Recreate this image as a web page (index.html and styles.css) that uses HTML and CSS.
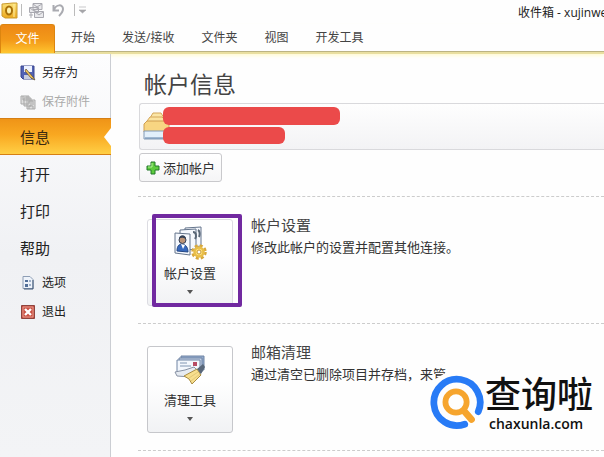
FILE: index.html
```html
<!DOCTYPE html>
<html lang="zh-CN">
<head>
<meta charset="utf-8">
<title>收件箱</title>
<link rel="stylesheet" href="styles.css">
</head>
<body>
<header class="titlebar">
  <div class="quick">
    <svg class="app-icon" width="17" height="17" viewBox="0 0 17 17"><defs><linearGradient id="gold" x2="0" y2="1"><stop stop-color="#fbe27a"/><stop offset="1" stop-color="#eda91d"/></linearGradient></defs><path d="M1 2 12 1h4v15H4l-3-2z" fill="url(#gold)" stroke="#c99a2e"/><path d="M13 2v13" stroke="#fff0a5"/><ellipse cx="8" cy="8.500" rx="3" ry="4" fill="#fff2a9" stroke="#a87009" stroke-width="2"/></svg>
    <i class="divider"></i>
    <svg width="17" height="17" viewBox="0 0 17 17" fill="#e9e9ec" stroke="#a9a9b0"><path d="M5 1.500h9v6H5zM1.500 5.500h9v5h-9zM6.500 9.500h9v6h-9z"/><path d="m5 2 4 3 5-3M2 6l4 3 4-3M7 10l4 3 4-3M1 13h4M3 11v5" fill="none"/></svg>
    <svg class="undo" width="13" height="15" viewBox="0 0 13 15"><path d="M1.500 2v5.500H7M2 7c2-6 9-6 9-1 0 3-2 5-4 7" fill="none" stroke="#aaabb1" stroke-width="2"/></svg>
    <i class="divider"></i>
    <svg class="more" width="7" height="8" viewBox="0 0 7 8"><path d="M0 1h7M0 4h7L3.500 7z" fill="#a5a5a9" stroke="#a5a5a9" stroke-width=".6"/></svg>
  </div>
  <span class="window-title">收件箱 - xujinwe</span>
</header>
<nav class="tabs">
  <button class="tab file">文件</button>
  <button class="tab">开始</button>
  <button class="tab">发送/接收</button>
  <button class="tab">文件夹</button>
  <button class="tab">视图</button>
  <button class="tab">开发工具</button>
</nav>
<div class="backstage">
  <nav class="side">
    <button class="item small"><svg width="16" height="16" viewBox="0 0 16 16"><path d="M1 1h13v13H3l-2-2z" fill="#5262b4" stroke="#39458d"/><path d="M4 1h8v6H4z" fill="#edf2ff"/><path d="M4 10h7v4H4z" fill="#c7cce0"/><path d="m6 4 7 8 2 3-4-2-6-7z" fill="#f4c65b" stroke="#57472e" stroke-width=".7"/></svg>另存为</button>
    <button class="item small" disabled><svg width="16" height="16" viewBox="0 0 16 16" fill="#dedede" stroke="#a9a9a9"><path d="M1 2h8v8H1zM4 4h7v8H4zM7 6h8v9H7z"/><path d="M3 2v4h4V2M9 9V7h4v4M9 15v-3h4v3" fill="none"/></svg>保存附件</button>
    <button class="item selected">信息</button>
    <button class="item">打开</button>
    <button class="item">打印</button>
    <button class="item">帮助</button>
    <button class="item small"><svg width="16" height="16" viewBox="0 0 16 16"><path d="M3 1.500h7l3 3v9H3z" fill="#eef3fa" stroke="#8e9eb5"/><path d="M13 5v9H4" fill="none" stroke="#3e5676"/><path d="M5 5h3v2H5zM5 9h3v3H5z" fill="#526f99"/><path d="M9 6h2M9 10h2" stroke="#526f99"/></svg>选项</button>
    <button class="item small"><svg width="16" height="16" viewBox="0 0 16 16"><path d="M1.500 1.500h13v13h-13z" fill="#c94f42" stroke="#8f433d"/><path d="M3 3h10v10H3z" fill="none" stroke="#e49b8d"/><path d="m5 5 6 6m0-6-6 6" stroke="#fff" stroke-width="2.400"/></svg>退出</button>
  </nav>
  <main class="content">
    <h1>帐户信息</h1>
    <div class="account">
      <svg width="28" height="30" viewBox="0 0 28 30"><path d="m7 6 3-5h8l3 5v8H7z" fill="#fbe6a6" stroke="#d4a75b"/><path d="m4 9 3-4h12l4 4v8H4z" fill="#fbe3a0" stroke="#d4a75b"/><path d="m1 12 3-3h17l5 3v8H1z" fill="#f8d582" stroke="#cf9e50"/><path d="M1 19h25v8H1z" fill="#e2effb" stroke="#8199b5"/><path d="M2 26h23" stroke="#5e7ea6"/></svg>
      <div class="masks"><i class="mask long"></i><i class="mask short"></i></div>
    </div>
    <button class="add"><svg width="14" height="14" viewBox="0 0 14 14"><path d="M5 1h4v4h4v4H9v4H5V9H1V5h4z" fill="#5ccb3d" stroke="#23782a"/><path d="M6 2v4H2" fill="none" stroke="#b2ef93"/></svg>添加帐户</button>
    <section class="row">
      <div class="frame">
        <button class="tile">
          <svg width="34" height="34" viewBox="0 0 34 34"><g fill="#f5f8fd" stroke="#65758c"><path d="m12 2 16-1v19l-16 2z"/><path d="m7 4 16-1v20L7 25z"/><path d="m2 7 15 1v21L2 27z"/></g><path d="M20 6c3 0 4 4 2 7M25 4c2 1 2 5 1 7" stroke="#596777" stroke-width="2" fill="none"/><path d="M4 25c0-6 3-7 5-7s6 2 6 8z" fill="#3769bd" stroke="#234683"/><path d="m8 18 2 5 2-4z" fill="#fff"/><circle cx="9.500" cy="14" r="3.500" fill="#bd9476" stroke="#334056"/><path d="M6 13c0-5 7-5 7 0-3-1-4-2-7 0z" fill="#334056"/><circle cx="26" cy="26" r="6.500" fill="none" stroke="#d8a83c" stroke-width="2.500" stroke-dasharray="3 2.100"/><circle cx="26" cy="26" r="4.500" fill="#ffe17a" stroke="#e8bd48" stroke-width="2.500"/><circle cx="26" cy="26" r="2" fill="#fff" stroke="#c59739"/></svg>
          <span>帐户设置</span><i class="arrow"></i>
        </button>
      </div>
      <div class="info"><h2>帐户设置</h2><p>修改此帐户的设置并配置其他连接。</p></div>
    </section>
    <section class="row">
      <button class="tile">
        <svg width="34" height="34" viewBox="0 0 34 34"><g stroke="#7185a4"><path d="M8 3h23v14H8z" fill="#91a9cd"/><path d="M6 5h23v14H6z" fill="#c5d3e9"/><path d="M4 7h23v14H4z" fill="#f3f7fd"/></g><path d="M7 10h7M7 13h11" stroke="#8196b2"/><path d="M20 9h4v4h-4z" fill="#b84b64"/><path d="m2 19 10-2 9-3 4 4-7 6-14-1z" fill="#e6ebf2" stroke="#8993a5"/><path d="m11 23 13-7 4 6-9 9-3-5z" fill="#f8df8e" stroke="#a98c42"/><path d="m16 25 9-6M18 28l9-7" stroke="#e3c877"/><path d="m24 16 6-5 2 3-4 7z" fill="#596779"/></svg>
        <span>清理工具</span><i class="arrow"></i>
      </button>
      <div class="info"><h2>邮箱清理</h2><p>通过清空已删除项目并存档，来管</p></div>
      <aside class="brand">
        <svg width="56" height="58" viewBox="0 0 58 58" fill="none" stroke-linecap="round"><path d="M37 51A24 24 0 1 1 51 38" stroke="#287bf6" stroke-width="7"/><circle cx="28" cy="28" r="11" stroke="#f6a52e" stroke-width="6"/><path d="m37 38 7 8" stroke="#f6a52e" stroke-width="7"/></svg>
        <div class="brand-text"><strong>查询啦</strong><span>chaxunla.com</span></div>
      </aside>
    </section>
    <section class="row end"></section>
  </main>
</div>
</body>
</html>
```
FILE: styles.css
```css
* { box-sizing: border-box; }
body {
  margin: 0;
  min-height: 100vh;
  display: flex;
  flex-direction: column;
  overflow: hidden;
  background: #fefefe;
  color: #333;
  font: 12px/18px "Open Sans", "Noto Sans CJK SC", sans-serif;
}
button {
  font: inherit;
  color: inherit;
  border: 0;
  background: none;
  padding: 0;
  white-space: nowrap;
}
h1, h2, p { margin: 0; font-weight: 400; }
svg { flex: none; display: block; }

.titlebar { height: 24px; display: flex; justify-content: space-between; overflow: hidden; }
.quick { display: flex; align-items: center; gap: 6px; padding: 0 0 4px 1px; }
.app-icon { margin-right: -3px; }
.divider { width: 1px; height: 12px; background: #bbb; }
.undo { margin: 0 3px 0 1px; }
.more { margin-left: -2px; }
.window-title { flex: 0 0 86px; min-width: 0; padding-top: 4px; white-space: nowrap; color: #222; }

.tabs {
  display: flex;
  align-items: flex-start;
  gap: 27px;
  height: 30px;
  border-bottom: 2px solid #e9dfa0;
  box-shadow: inset 0 -1px #bcb482, 0 2px 3px #fffbd5;
}
.tab { height: 28px; color: #444; }
.file {
  width: 55px;
  height: 29px;
  margin-right: -11px;
  border: 1px solid #dc850f;
  border-bottom: 0;
  border-radius: 3px 3px 0 0;
  background: linear-gradient(#ed8815, #f39a19 55%, #ffc52f);
  color: #fff;
}

.backstage { flex: 1; display: flex; }
.side {
  flex: none;
  width: 111px;
  display: flex;
  flex-direction: column;
  padding-top: 4px;
  border-right: 1px solid #cbced3;
  background: linear-gradient(#fdfdfe, #f0f1f4 50%, #f3f4f6);
}
.item {
  height: 37px;
  padding-left: 20px;
  display: flex;
  align-items: center;
  gap: 6px;
  font-size: 15px;
  color: #222;
}
.small { height: 29px; font-size: 12px; }
.small:disabled { color: #aaa; }
.item:not(.small) + .small { margin-top: 2px; }
.selected {
  position: relative;
  margin: 2px -1px 0 0;
  border: solid #d67f14;
  border-width: 1px 0;
  background: linear-gradient(#ef9417, #f9a821 45%, #ffcf45);
  color: #3c2a10;
}
.selected::after {
  content: "";
  position: absolute;
  right: 0;
  top: 9px;
  border: solid transparent;
  border-width: 9px 7px 9px 0;
  border-right-color: #fefefe;
}

.content { flex: 1; min-width: 0; padding: 14px 0 0 27px; }
h1 { margin: 0 0 3px 6px; font-size: 23px; line-height: 32px; color: #444; }
.account {
  height: 47px;
  margin-left: 1px;
  padding: 3px;
  display: flex;
  border: 1px solid #d9d9dc;
  border-right: 0;
  border-radius: 3px 0 0 3px;
  background: linear-gradient(#fefefe, #f3f3f5);
}
.account svg { margin-top: 5px; }
.masks { position: relative; display: grid; gap: 2px; align-content: start; margin-left: -8px; }
.mask { height: 17px; border-radius: 6px; background: #eb4a4a; }
.long { width: 177px; height: 18px; }
.short { width: 122px; }
.add {
  display: flex;
  align-items: center;
  gap: 3px;
  height: 29px;
  margin: 3px 0 14px 1px;
  padding: 0 6px;
  border: 1px solid #c9c9cc;
  border-radius: 3px;
  background: linear-gradient(#fff, #f5f5f6);
  font-size: 13px;
}
.row {
  position: relative;
  display: flex;
  align-items: flex-start;
  gap: 18px;
  height: 127px;
  padding: 22px 0 0 9px;
  border-top: 1px dashed #ccc;
}
.tile {
  flex: none;
  width: 86px;
  height: 87px;
  padding-top: 6px;
  display: flex;
  flex-direction: column;
  align-items: center;
  border: 1px solid #c6c7cb;
  border-radius: 3px;
  background: linear-gradient(#fff 40%, #f1f2f4);
  font-size: 13px;
}
.tile span { margin-top: 3px; line-height: 20px; }
.arrow {
  margin-top: 7px;
  border: solid transparent;
  border-width: 4px 3px 0;
  border-top-color: #555;
}
.frame { position: relative; }
.frame .tile { border-color: #dcdce2; }
.frame::after {
  content: "";
  position: absolute;
  inset: -5px -9px -1px 5px;
  border: 4px solid #7129a0;
  border-radius: 2px;
}
.info { margin-top: -5px; white-space: nowrap; }
h2 { font-size: 15px; line-height: 22px; color: #444; }
p { font-size: 13px; line-height: 22px; }
.brand {
  position: absolute;
  top: 44px;
  right: 0;
  width: 177px;
  height: 78px;
  padding: 6px 0 0 2px;
  display: flex;
  background: #fefefe;
  clip-path: polygon(0 16px, 20px 4px, 34px 0, 100% 0, 100% 100%, 0 100%);
}
.brand-text { display: flex; flex-direction: column; color: #111; }
.brand-text strong { font-size: 36px; line-height: 42px; font-weight: 500; }
.brand-text span { margin-left: 4px; font: 600 14px/16px "Open Sans", sans-serif; }
.end { height: 6px; padding: 0; }
```
